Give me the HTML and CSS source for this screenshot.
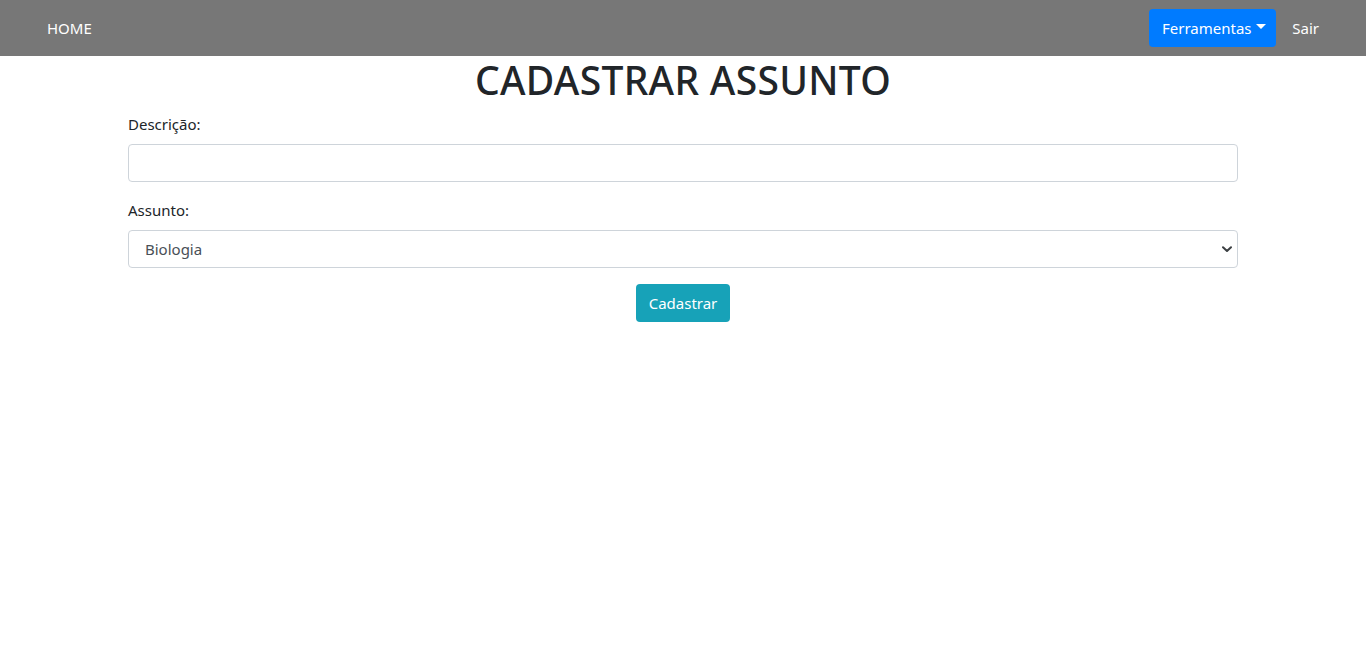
FILE: index.html
```html
<!DOCTYPE html>
<html lang="pt-BR">
<head>
<meta charset="utf-8">
<title>Cadastrar Assunto</title>
<link rel="stylesheet" href="styles.css">
</head>
<body>
<nav class="navbar">
  <a class="nav-link home" href="#">HOME</a>
  <div class="nav-right">
    <button class="btn-tools" type="button">Ferramentas<span class="caret"></span></button>
    <a class="nav-link" href="#">Sair</a>
  </div>
</nav>
<main class="container">
  <h1 class="title">CADASTRAR ASSUNTO</h1>
  <form class="form">
    <div class="form-group">
      <label class="label" for="desc">Descrição:</label>
      <input class="form-control" id="desc" type="text">
    </div>
    <div class="form-group">
      <label class="label" for="assunto">Assunto:</label>
      <div class="select-wrap">
        <select class="form-control select" id="assunto">
          <option>Biologia</option>
        </select>
        <svg class="chev" width="10" height="7" viewBox="0 0 10 7"><path d="M1 1.2 L5 5 L9 1.2" fill="none" stroke="#3c4043" stroke-width="2" stroke-linecap="round" stroke-linejoin="round"/></svg>
      </div>
    </div>
    <div class="actions">
      <button class="btn-info" type="submit">Cadastrar</button>
    </div>
  </form>
</main>
</body>
</html>
```
FILE: styles.css
```css
* { box-sizing: border-box; }
html, body { margin: 0; padding: 0; }
body {
  font-family: "Noto Sans", "Open Sans", sans-serif;
  font-size: 16px;
  line-height: 1.5;
  color: #212529;
  background: #fff;
}
.navbar {
  height: 56px;
  background: #777777;
  display: flex;
  align-items: center;
  justify-content: space-between;
  padding: 0 39px 0 39px;
}
.nav-link {
  color: #fff;
  text-decoration: none;
  padding: 8px;
  font-size: 15px;
}
.nav-right {
  display: flex;
  align-items: center;
  gap: 8px;
}
.btn-tools {
  background: #007bff;
  color: #fff;
  border: none;
  border-radius: 4px;
  height: 38px;
  width: 127px;
  padding: 0 12px 0 14px;
  font-family: inherit;
  font-size: 15px;
  display: flex;
  align-items: center;
  justify-content: center;
  gap: 4px;
}
.caret {
  display: inline-block;
  width: 0;
  height: 0;
  border-top: 5px solid #fff;
  border-left: 5px solid transparent;
  border-right: 5px solid transparent;
  margin-top: -3px;
}
.container {
  width: 1110px;
  margin: 0 auto;
}
.title {
  margin: 0 0 8px;
  font-size: 39px;
  font-weight: 500;
  line-height: 48px;
  text-align: center;
  letter-spacing: 0.3px;
}
.form-group { margin-bottom: 16px; }
.label {
  display: block;
  margin-bottom: 8px;
  font-size: 15px;
  line-height: 24px;
}
.form-control {
  display: block;
  width: 100%;
  height: 38px;
  border: 1px solid #ced4da;
  border-radius: 4px;
  padding: 6px 12px;
  font-family: inherit;
  font-size: 15px;
  color: #495057;
  background: #fff;
}
.select-wrap { position: relative; }
.select {
  appearance: none;
  -webkit-appearance: none;
  padding-left: 16px;
}
.chev {
  position: absolute;
  right: 6px;
  top: 16px;
  pointer-events: none;
}
.actions {
  display: flex;
  justify-content: center;
}
.btn-info {
  background: #17a2b8;
  color: #fff;
  border: none;
  border-radius: 4px;
  height: 38px;
  width: 94px;
  font-family: inherit;
  font-size: 15px;
}
```
